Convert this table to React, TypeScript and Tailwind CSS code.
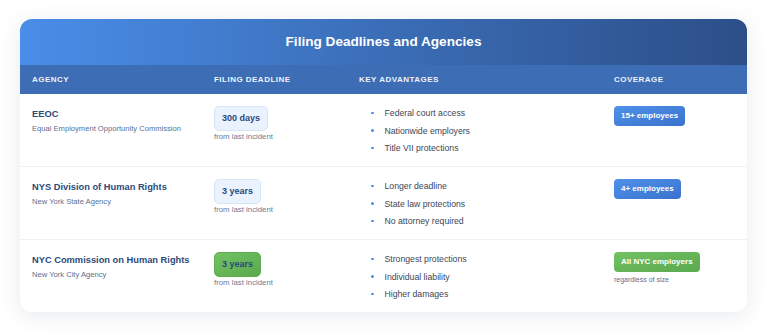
const rows = [
  {
    name: 'EEOC',
    sub: 'Equal Employment Opportunity Commission',
    deadline: '300 days',
    green: false,
    points: ['Federal court access', 'Nationwide employers', 'Title VII protections'],
    coverage: '15+ employees',
    coverageGreen: false,
    note: '',
  },
  {
    name: 'NYS Division of Human Rights',
    sub: 'New York State Agency',
    deadline: '3 years',
    green: false,
    points: ['Longer deadline', 'State law protections', 'No attorney required'],
    coverage: '4+ employees',
    coverageGreen: false,
    note: '',
  },
  {
    name: 'NYC Commission on Human Rights',
    sub: 'New York City Agency',
    deadline: '3 years',
    green: true,
    points: ['Strongest protections', 'Individual liability', 'Higher damages'],
    coverage: 'All NYC employers',
    coverageGreen: true,
    note: 'regardless of size',
  },
]

const cols = 'grid grid-cols-[182px_145px_255px_145px]'

export default function App() {
  return (
    <div className="h-[332px] w-[768px] bg-white pl-[20px] pt-[19px] font-['Liberation_Sans',Arial,sans-serif]">
      <div className="w-[727px] overflow-hidden rounded-[12px] bg-white shadow-[0_4px_22px_rgba(30,50,90,0.10)]">
        <div className="flex h-[46px] items-center justify-center bg-gradient-to-r from-[#4a8ee9] to-[#2c4f88]">
          <h1 className="text-[13.6px] font-bold text-white">Filing Deadlines and Agencies</h1>
        </div>

        <div className={`${cols} h-[29px] items-center bg-[#3c6db5] text-[8px] font-bold tracking-[0.06em] text-[#eef3fb]`}>
          <div className="px-[12px]">AGENCY</div>
          <div className="px-[12px]">FILING DEADLINE</div>
          <div className="px-[12px]">KEY ADVANTAGES</div>
          <div className="px-[12px]">COVERAGE</div>
        </div>

        {rows.map((r, i) => (
          <div key={i} className={`${cols} ${i > 0 ? 'border-t border-[#eef1f5]' : ''} pb-[11px] pt-[12px]`}>
            <div className="px-[12px]">
              <div className="text-[9.3px] font-bold leading-[16px] text-[#2c4a7a]">{r.name}</div>
              <div className="mt-[1px] text-[7.6px] leading-[12px] text-[#5b6f90]">{r.sub}</div>
            </div>
            <div className="flex flex-col items-start px-[12px]">
              <span
                className={`rounded-[5px] border px-[7px] py-[5px] text-[9px] font-bold leading-[13px] text-[#2c4a7a] ${
                  r.green
                    ? 'border-[#5faf52] bg-gradient-to-br from-[#72c264] to-[#5aa94e]'
                    : 'border-[#d6e4f7] bg-[#eaf2fd]'
                }`}
              >
                {r.deadline}
              </span>
              <div className="text-[7.8px] leading-[12px] text-[#6a7a94]">from last incident</div>
            </div>
            <div className="px-[12px]">
              <ul className="flex flex-col gap-[3.5px]">
                {r.points.map((p) => (
                  <li key={p} className="flex items-center text-[8.7px] leading-[14px] text-[#3d4756]">
                    <span className="ml-[12px] mr-[11px] h-[2.5px] w-[2.5px] rounded-full bg-[#4a8ee9]" />
                    {p}
                  </li>
                ))}
              </ul>
            </div>
            <div className="flex flex-col items-start px-[12px]">
              <span
                className={`rounded-[4px] px-[7px] py-[4px] text-[8px] font-bold leading-[12px] text-white ${
                  r.coverageGreen
                    ? 'bg-gradient-to-br from-[#72c264] to-[#5aa94e]'
                    : 'bg-gradient-to-br from-[#4f91ea] to-[#3a72cc]'
                }`}
              >
                {r.coverage}
              </span>
              {r.note && <div className="mt-[2px] text-[7px] leading-[12px] text-[#5b6f90]">{r.note}</div>}
            </div>
          </div>
        ))}
      </div>
    </div>
  )
}
